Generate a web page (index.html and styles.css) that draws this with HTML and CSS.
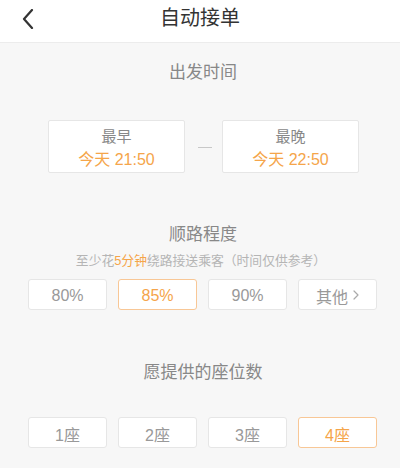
FILE: index.html
```html
<!DOCTYPE html>
<html lang="zh">
<head>
<meta charset="utf-8">
<title>自动接单</title>
<link rel="stylesheet" href="styles.css">
</head>
<body>
<header class="topbar">
  <div class="back">
    <svg width="12" height="20" viewBox="0 0 12 20"><polyline points="10,1 2,10 10,19" fill="none" stroke="#333" stroke-width="2.2" stroke-linecap="round" stroke-linejoin="round"/></svg>
  </div>
  <h1 class="title">自动接单</h1>
  <div></div>
</header>
<main class="page">
  <section class="sec sec-time">
    <h2 class="sec-title">出发时间</h2>
    <div class="time-row">
      <div class="time-box">
        <div class="time-label">最早</div>
        <div class="time-val">今天 21:50</div>
      </div>
      <div class="dash"><span></span></div>
      <div class="time-box">
        <div class="time-label">最晚</div>
        <div class="time-val">今天 22:50</div>
      </div>
    </div>
  </section>
  <section class="sec sec-route">
    <h2 class="sec-title">顺路程度</h2>
    <p class="sub">至少花<span class="hl">5分钟</span>绕路接送乘客（时间仅供参考）</p>
    <div class="opts">
      <div class="opt">80%</div>
      <div class="opt on">85%</div>
      <div class="opt">90%</div>
      <div class="opt">其他<svg class="chev" width="6" height="10" viewBox="0 0 6 10"><polyline points="1,1 5,5 1,9" fill="none" stroke="#aaa" stroke-width="1.2" stroke-linecap="round" stroke-linejoin="round"/></svg></div>
    </div>
  </section>
  <section class="sec sec-seat">
    <h2 class="sec-title">愿提供的座位数</h2>
    <div class="opts opts-seat">
      <div class="opt">1座</div>
      <div class="opt">2座</div>
      <div class="opt">3座</div>
      <div class="opt on">4座</div>
    </div>
  </section>
</main>
</body>
</html>
```
FILE: styles.css
```css
* { box-sizing: border-box; }
html, body { margin: 0; padding: 0; }
body {
  width: 400px;
  height: 468px;
  overflow: hidden;
  background: #f7f7f7;
  font-family: "Liberation Sans", "Noto Sans CJK SC", sans-serif;
  color: #888;
}
.topbar {
  height: 43px;
  background: #fff;
  border-bottom: 1px solid #ececec;
  display: grid;
  grid-template-columns: 1fr auto 1fr;
  align-items: start;
}
.back {
  padding: 9px 0 0 22px;
  line-height: 0;
}
.title {
  margin: 0;
  font-size: 20px;
  font-weight: normal;
  line-height: 36px;
  color: #333;
}
.page {
  display: flex;
  flex-direction: column;
}
.sec-title {
  margin: 0;
  font-size: 17px;
  font-weight: normal;
  line-height: 24px;
  text-align: center;
  color: #888;
  padding-left: 6px;
}
.sec-time { padding-top: 18px; }
.time-row {
  margin-top: 35px;
  display: flex;
  padding-left: 48px;
}
.time-box {
  width: 137px;
  height: 53px;
  background: #fff;
  border: 1px solid #e6e6e6;
  border-radius: 2px;
  padding-top: 6px;
  display: flex;
  flex-direction: column;
  align-items: center;
  gap: 3px;
}
.time-label {
  font-size: 15px;
  line-height: 20px;
  color: #888;
}
.time-val {
  font-size: 16px;
  line-height: 20px;
  color: #f5a54a;
}
.dash {
  width: 37px;
  display: flex;
  align-items: center;
  justify-content: center;
  padding-left: 2px;
  padding-top: 1px;
}
.dash span {
  display: block;
  width: 14px;
  height: 1px;
  background: #c8c8c8;
}
.sec-route { padding-top: 50px; }
.sub {
  margin: 5px 0 0;
  font-size: 12.8px;
  line-height: 18px;
  text-align: center;
  color: #b5b5b5;
  padding-left: 2px;
}
.hl { color: #f5a54a; }
.opts {
  margin-top: 9px;
  display: flex;
  gap: 11px;
  padding-left: 28px;
}
.opt {
  width: 79px;
  height: 31px;
  background: #fff;
  border: 1px solid #e6e6e6;
  border-radius: 3px;
  display: flex;
  align-items: center;
  justify-content: center;
  gap: 5px;
  font-size: 16px;
  color: #999;
  padding-top: 2px;
}
.opt.on {
  border-color: #f8c796;
  color: #f5a54a;
}
.chev { margin-top: -1px; }
.sec-seat { padding-top: 51px; }
.opts-seat { margin-top: 32px; }
```
